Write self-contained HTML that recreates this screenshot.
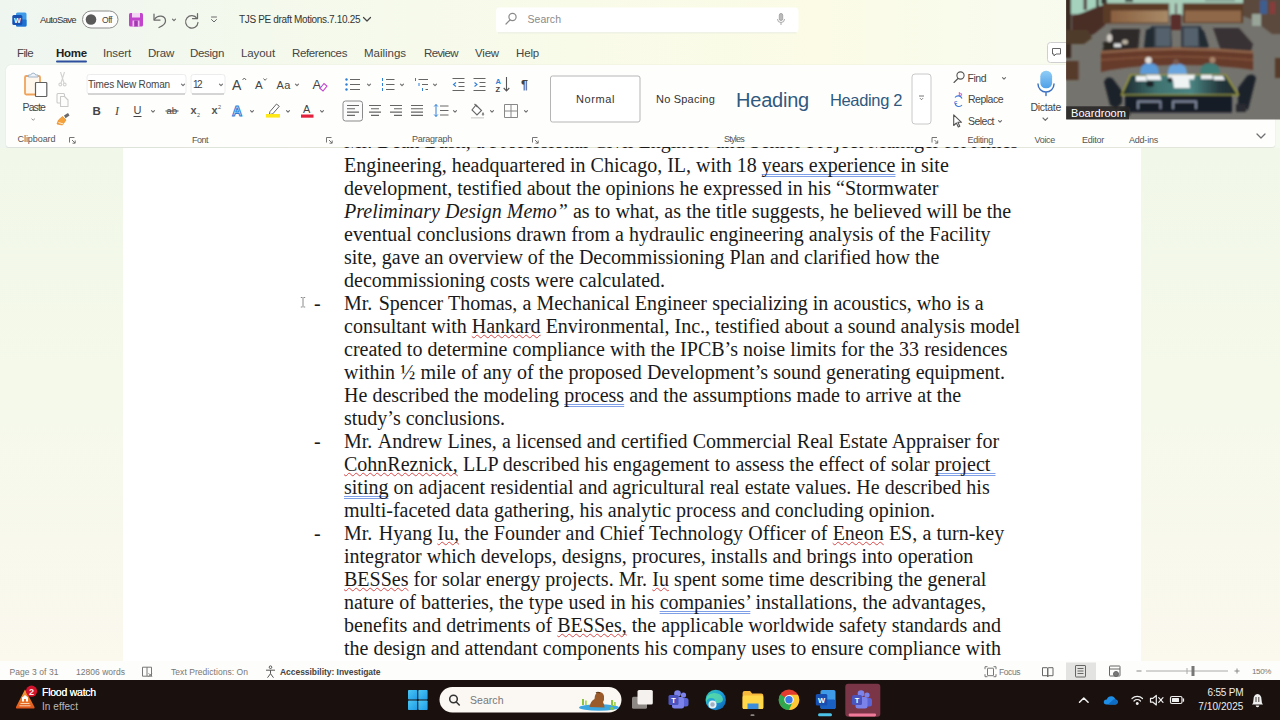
<!DOCTYPE html>
<html><head><meta charset="utf-8"><title>Word</title>
<style>
*{box-sizing:border-box;margin:0;padding:0}
html,body{width:1280px;height:720px;overflow:hidden;background:#f5f9ec;font-family:"Liberation Sans",sans-serif;}
.abs{position:absolute}
#titlebar{position:absolute;left:0;top:0;width:1280px;height:149px;background:linear-gradient(90deg,#eff6f0 0,#f4f9ed 20%,#f9fbe9 45%,#fbfbe6 64%,#f8fbee 80%,#f5faf0 100%)}
#ribbon{position:absolute;left:5.5px;top:64.5px;width:1269px;height:82.9px;background:#fefffd;border-radius:5px 5px 3px 3px;box-shadow:0 .5px 1.5px rgba(0,0,0,.10)}
#docbg{position:absolute;left:0;top:148px;width:1280px;height:512.5px;background:linear-gradient(180deg,#f2f8e9 0,#f4f9ea 45%,#fbf8ee 100%)}
#page{position:absolute;left:122.5px;top:148px;width:1018.5px;height:514px;background:#fff}
#status{position:absolute;left:0;top:660.5px;width:1280px;height:19.5px;background:#fdfdfb}
#taskbar{position:absolute;left:0;top:680px;width:1280px;height:40px;background:#1a110e}
.t{position:absolute;white-space:nowrap;color:#444}
.doc{position:absolute;left:344px;white-space:nowrap;font-family:"Liberation Serif",serif;font-size:20px;line-height:23px;color:#1a1a1a}
.dash{position:absolute;left:314px;font-family:"Liberation Serif",serif;font-size:20px;line-height:23px;color:#1a1a1a}
.sq{text-decoration:underline wavy #d94848;text-decoration-thickness:.9px;text-underline-offset:1.2px;text-decoration-skip-ink:none}
.gr{text-decoration:underline double #7f9fe6;text-decoration-thickness:.7px;text-underline-offset:1.5px;text-decoration-skip-ink:none}
</style></head><body>
<div id="titlebar"></div>
<div id="ribbon"></div>
<div id="docbg"></div>
<div id="page"></div>
<div id="status"></div>
<div id="taskbar"></div>
<!--DOC-->
<div id="doc" style="position:absolute;left:0;top:147.4px;width:1280px;height:513.4px;overflow:hidden">
<div class="doc" style="top:-17.900000000000006px">Mr. Dean Bush, a Professional Civil Engineer and Senior Project Manager for Ames</div>
<div class="doc" style="top:6.599999999999994px">Engineering, headquartered in Chicago, IL, with 18 <span class="gr">years experience</span> in site</div>
<div class="doc" style="top:29.599999999999994px">development, testified about the opinions he expressed in his “Stormwater</div>
<div class="doc" style="top:52.599999999999994px;word-spacing:0.100px"><i>Preliminary Design Memo”</i> as to what, as the title suggests, he believed will be the</div>
<div class="doc" style="top:75.6px">eventual conclusions drawn from a hydraulic engineering analysis of the Facility</div>
<div class="doc" style="top:98.6px">site, gave an overview of the Decommissioning Plan and clarified how the</div>
<div class="doc" style="top:121.6px">decommissioning costs were calculated.</div>
<div class="dash" style="top:144.6px">-</div>
<div class="doc" style="top:144.6px;word-spacing:0.109px"><span style="margin-right:1.3px">Mr.</span> Spencer Thomas, a Mechanical Engineer specializing in acoustics, who is a</div>
<div class="doc" style="top:167.6px">consultant with <span class="sq">Hankard</span> Environmental, Inc., testified about a sound analysis model</div>
<div class="doc" style="top:190.6px;word-spacing:0.117px">created to determine compliance with the IPCB’s noise limits for the 33 residences</div>
<div class="doc" style="top:213.6px;word-spacing:0.164px">within ½ mile of any of the proposed Development’s sound generating equipment.</div>
<div class="doc" style="top:236.6px;word-spacing:0.058px">He described the modeling <span class="gr">process</span> and the assumptions made to arrive at the</div>
<div class="doc" style="top:259.6px">study’s conclusions.</div>
<div class="dash" style="top:282.6px">-</div>
<div class="doc" style="top:282.6px;word-spacing:0.209px"><span style="margin-right:1.3px">Mr.</span> Andrew Lines, a licensed and certified Commercial Real Estate Appraiser for</div>
<div class="doc" style="top:305.6px;word-spacing:0.092px"><span class="sq">CohnReznick,</span> LLP described his engagement to assess the effect of solar <span class="gr">project&nbsp;</span></div>
<div class="doc" style="top:328.6px;word-spacing:0.036px"><span class="gr">siting</span> on adjacent residential and agricultural real estate values. He described his</div>
<div class="doc" style="top:351.6px">multi-faceted data gathering, his analytic process and concluding opinion.</div>
<div class="dash" style="top:374.6px">-</div>
<div class="doc" style="top:374.6px;word-spacing:0.177px"><span style="margin-right:1.3px">Mr.</span> Hyang <span class="sq">Iu,</span> the Founder and Chief Technology Officer of <span class="sq">Eneon</span> ES, a turn-key</div>
<div class="doc" style="top:397.6px;word-spacing:0.044px">integrator which develops, designs, procures, installs and brings into operation</div>
<div class="doc" style="top:420.6px;word-spacing:0.150px"><span class="sq">BESSes</span> for solar energy projects. Mr. <span class="sq">Iu</span> spent some time describing the general</div>
<div class="doc" style="top:443.6px;word-spacing:0.227px">nature of batteries, the type used in his <span class="gr">companies’</span> installations, the advantages,</div>
<div class="doc" style="top:466.6px">benefits and detriments of <span class="sq">BESSes,</span> the applicable worldwide safety standards and</div>
<div class="doc" style="top:489.6px">the design and attendant components his company uses to ensure compliance with</div>
</div>
<!--/DOC-->
<!--TITLE-->
<svg class="abs" style="left:0;top:0" width="1280" height="150" viewBox="0 0 1280 150" font-family="Liberation Sans, sans-serif">
<!-- word icon -->
<rect x="16" y="12.500" width="10.500" height="14" rx="1.500" fill="#3f9be8"/>
<rect x="16" y="19.500" width="10.500" height="7" rx="1" fill="#1f6fd0"/>
<rect x="12.300" y="15" width="10" height="10" rx="1.500" fill="#174fb0"/>
<text x="17.300" y="22.800" font-size="7.200" font-weight="bold" fill="#fff" text-anchor="middle">W</text>
<!-- autosave toggle -->
<rect x="82.5" y="11" width="35.5" height="17" rx="8.5" fill="#fdfdfd" stroke="#8c8c8c" stroke-width="1"/>
<circle cx="91" cy="19.500" r="5.300" fill="#595959"/>
<!-- save -->
<rect x="129" y="13" width="14" height="13.5" rx="1.5" fill="#c244cc"/>
<rect x="132" y="13" width="8" height="4.5" fill="#f3d6f4"/>
<rect x="132.5" y="20.5" width="7" height="6" fill="#ecc0ee"/>
<rect x="134.2" y="20.5" width="3.6" height="6" fill="#a338b0"/>
<!-- undo -->
<g fill="none" stroke="#6a6a6a" stroke-width="1.250" stroke-linecap="round" stroke-linejoin="round">
<path d="M154 14v6h6"/><path d="M154.5 19.5C157.5 14.5 165.5 15 165.5 21C165.5 24.5 162.5 26 159 27.5"/>
<path d="M172.5 19.2l1.500 1.500l1.500-1.500" stroke-width="1.1"/>
<!-- redo -->
<path d="M197.5 13.5v5h-5"/><path d="M197 18.5A6.2 6.2 0 1 0 198 22.5"/>
<!-- qat -->
<path d="M211.5 17h5M211.5 19.5l2.5 2.5l2.5-2.5" stroke-width="1"/>
<!-- title chevron -->
<path d="M363.5 17.5l3.5 3.5l3.5-3.5" stroke="#444" stroke-width="1.2"/>
</g>
<!-- search box -->
<rect x="496" y="7.500" width="302.500" height="25" rx="3.500" fill="#fff"/><path d="M498 32.800h298.500" stroke="#e4e8dc" stroke-width=".8"/>
<g fill="none" stroke="#8a8a8a" stroke-width="1.2" stroke-linecap="round"><circle cx="512.5" cy="17" r="3.6"/><path d="M510 20l-4 4"/></g>
<g fill="none" stroke="#a8a8a8" stroke-width="1"><rect x="779.3" y="13.5" width="3.4" height="7" rx="1.7" fill="#bbb"/><path d="M777.5 19a3.5 3.5 0 0 0 7 0M781 22.5v2.5"/></g>
<!-- home underline -->
<rect x="56" y="60.5" width="31" height="2" rx="1" fill="#2d4f9e"/>
<!-- comments -->
<rect x="1047.5" y="42.5" width="22" height="20" rx="3" fill="#fff" stroke="#cfcfcf"/>
<path d="M1052.5 48.5h8v5.5h-4.5l-2 2v-2h-1.5z" fill="none" stroke="#666" stroke-width="1"/>

<!-- ===== ribbon: clipboard ===== -->
<g fill="none" stroke-linejoin="round">
<rect x="25" y="76" width="15" height="18.500" rx="1.200" stroke="#f0a35c" stroke-width="1.800" fill="#fff6ec"/>
<path d="M28.500 77v-2h2.200a2.600 2.600 0 0 1 5 0h2.300v2z" stroke="#9fb4c8" stroke-width="1" fill="#eef4fa"/>
<rect x="35.500" y="82.500" width="11.300" height="14" rx=".8" fill="#fff" stroke="#5f5f5f" stroke-width="1.200"/>
<path d="M31.500 118.700l1.700 1.500l1.700-1.500" stroke="#888" stroke-width=".9"/>
<!-- cut -->
<g stroke="#d2d2d2" stroke-width="1.1"><path d="M60.5 72l3.500 11M64.500 72l-3.500 11"/><circle cx="60.3" cy="84.5" r="1.4"/><circle cx="64.7" cy="84.5" r="1.4"/></g>
<!-- copy -->
<g stroke="#cacaca" stroke-width="1.1"><rect x="57" y="93.5" width="7.5" height="9.5" rx="1"/><path d="M60.5 96.5h4l3.5 3.5v6.5h-7.5z" fill="#fdfefc"/></g>
<!-- format painter -->
<path d="M64 115.500l4-2.500l1.500 2.500l-4 2.800z" fill="#6a6a6a" stroke="none"/>
<path d="M62.500 116.500l3.500 3.500l-3.500 5l-5.500-1l1.500-4z" fill="#f4a23c" stroke="#e58a2a" stroke-width=".7"/>
<path d="M58.500 122.500l5 1.500" stroke="#fff" stroke-width=".8"/>
</g>
<!-- font boxes -->
<rect x="87" y="74.500" width="99" height="19.500" rx="2.500" fill="#fff" stroke="#ececec"/>
<path d="M88 94h97" stroke="#b4b4b4" stroke-width="1"/>
<rect x="191" y="74.500" width="34" height="19.500" rx="2.500" fill="#fff" stroke="#ececec"/>
<path d="M192 94h32" stroke="#b4b4b4" stroke-width="1"/>
<g fill="none" stroke="#707070" stroke-width="1.150" stroke-linecap="round" stroke-linejoin="round">
<path d="M181.5 84.2l1.500 1.500l1.500-1.500"/><path d="M219.5 84.2l1.500 1.500l1.500-1.500"/>
<path d="M295.5 84.2l1.500 1.500l1.500-1.500"/>
<path d="M151.5 110.7l1.500 1.500l1.500-1.500"/><path d="M250.5 110.7l1.500 1.500l1.500-1.500"/><path d="M286.5 110.7l1.500 1.500l1.500-1.500"/><path d="M320.5 110.7l1.500 1.500l1.500-1.500"/>
<path d="M367.5 84.2l1.500 1.500l1.500-1.500"/><path d="M400.5 84.2l1.500 1.500l1.500-1.500"/><path d="M433.5 84.2l1.500 1.500l1.500-1.500"/>
<path d="M453.5 110.7l1.500 1.500l1.500-1.500"/><path d="M490.5 110.7l1.500 1.500l1.500-1.500"/><path d="M524.5 110.7l1.500 1.500l1.500-1.500"/>
<path d="M1002.5 77.7l1.500 1.500l1.500-1.500"/><path d="M998.5 120.7l1.500 1.500l1.500-1.500"/><path d="M1043 118l2.3 2.3l2.3-2.3"/>
<path d="M1257 134l4 4l4-4" stroke-width="1.3"/>
</g>
<!-- font row 1 -->
<g fill="#444">
<text x="232" y="89.5" font-size="14">A</text><path d="M242.5 80l1.8-2l1.8 2" fill="none" stroke="#555" stroke-width=".9"/>
<text x="255" y="89" font-size="11.5">A</text><path d="M263.5 78.5l1.6 1.8l1.6-1.8" fill="none" stroke="#555" stroke-width=".9"/>
<text x="276.5" y="88.5" font-size="11" letter-spacing=".4">Aa</text>
<text x="312.5" y="89" font-size="13">A</text>
<path d="M320 88.5l4-5l3 2.5l-4 5z" fill="#fff" stroke="#c244cc" stroke-width="1.1"/>
<!-- row 2 -->
<text x="92.5" y="115" font-size="11.5" font-weight="bold">B</text>
<text x="115" y="115" font-size="12" font-style="italic" font-family="Liberation Serif, serif">I</text>
<text x="133.5" y="114" font-size="11">U</text><rect x="133.5" y="116" width="8" height="1" fill="#444"/>
<text x="166.500" y="114.300" font-size="9.500" fill="#444">ab</text><rect x="165.5" y="110.5" width="13" height="1" fill="#444"/>
<text x="190.5" y="114" font-size="11" font-weight="bold" fill="#555">x</text><text x="197" y="117" font-size="5.5" fill="#555">2</text>
<text x="211.5" y="114" font-size="11" font-weight="bold" fill="#555">x</text><text x="218" y="108.5" font-size="5.5" fill="#555">2</text>
<text x="232" y="116" font-size="14" font-weight="bold" fill="#cfe3fa" stroke="#2f7fd8" stroke-width="1">A</text>
<path d="M270 111.5l6.5-7.5l2.8 2.3l-6.5 7.5l-3.5.8z" fill="#fff" stroke="#666" stroke-width="1"/>
<rect x="266" y="114" width="14" height="3.6" fill="#ffe81a"/>
<text x="303" y="112.5" font-size="11">A</text>
<rect x="301" y="114.5" width="12.5" height="3.2" fill="#e2213c"/>
</g>
<!-- launchers -->
<g fill="none" stroke="#666" stroke-width=".9">
<path id="ln" d="M69.5 142.500v-5h5M72 140l3 3M75.200 140.500v2.700h-2.700"/>
<path d="M326.500 142.500v-5h5M329 140l3 3M332.200 140.500v2.700h-2.700"/>
<path d="M532.500 142.500v-5h5M535 140l3 3M538.200 140.500v2.700h-2.700"/>
<path d="M932 142.500v-5h5M934.500 140l3 3M937.700 140.500v2.700h-2.700"/>
</g>
<!-- paragraph row 1 -->
<g fill="none" stroke="#666" stroke-width="1.1">
<g fill="#2f7fd8" stroke="none"><circle cx="346.500" cy="79.500" r="1.2"/><circle cx="346.500" cy="84.500" r="1.2"/><circle cx="346.500" cy="89.500" r="1.2"/></g>
<path d="M350 79.500h10M350 84.500h10M350 89.500h10"/>
<g stroke="#2f7fd8" stroke-width="1"><path d="M382.500 78v3M382.500 83v3M382.500 88v3"/></g>
<path d="M386 79.500h8.500M386 84.500h8.500M386 89.500h8.500"/>
<g stroke="#2f7fd8" stroke-width="1"><path d="M415.500 78v3M419 83v3M422.500 88v3"/></g>
<path d="M418.500 79.500h9.500M422 84.500h6M425.500 89.500h2.500"/>
<!-- indents -->
<path d="M452.500 78.500h12M458.500 82.500h6M458.500 86.500h6M452.500 90.500h12"/>
<path d="M456 82.500l-2.500 2l2.500 2" stroke="#2f7fd8"/>
<path d="M473.500 78.500h12M479.500 82.500h6M479.500 86.500h6M473.500 90.500h12"/>
<path d="M474.500 82.500l2.500 2l-2.500 2" stroke="#2f7fd8"/>
<!-- sort -->
<path d="M506.500 77v13.500M503.700 88l2.800 3l2.800-3" stroke="#555"/>
</g>
<text x="495.500" y="83.500" font-size="7.500" font-weight="bold" fill="#2f7fd8">A</text>
<text x="495.500" y="91.500" font-size="7.500" font-weight="bold" fill="#444">Z</text>
<text x="521" y="89" font-size="12.500" font-weight="bold" fill="#444">¶</text>
<!-- paragraph row 2 -->
<rect x="343" y="101" width="19.500" height="20" rx="2.500" fill="#fbfbfb" stroke="#8a8a8a"/>
<g fill="none" stroke="#666" stroke-width="1.1">
<path d="M347 105.500h12M347 108.800h8M347 112.100h12M347 115.400h8"/>
<path d="M369 105.500h12M371 108.800h8M369 112.100h12M371 115.400h8"/>
<path d="M390 105.500h12M394 108.800h8M390 112.100h12M394 115.400h8"/>
<path d="M411 105.500h12M411 108.800h12M411 112.100h12M411 115.400h12"/>
<path d="M440 106h8.500M440 110.500h8.500M440 115h8.500"/>
<path d="M436 104.500v12M434.200 106.500l1.800-2l1.800 2M434.200 114.500l1.800 2l1.800-2" stroke="#2f7fd8" stroke-width="1"/>
<!-- shading bucket -->
<path d="M476 105l5.500 5.500l-4.500 4.500l-5-5z" fill="#fff"/><path d="M474.500 104l3 3" /><path d="M483 112.500q1.500 2.200 0 3q-1.500-.8 0-3z" fill="#666" stroke-width=".6"/>
<rect x="471" y="117" width="13" height="1.600" fill="#d9d9d9" stroke="none"/>
<!-- borders -->
<path d="M504.500 104.500h13v13h-13zM511 104.500v13M504.500 111h13" stroke="#888" stroke-width="1"/>
</g>
<!-- styles -->
<rect x="550.500" y="76" width="89.500" height="46" rx="2" fill="#fff" stroke="#b5b5b5"/>
<rect x="912" y="74" width="19" height="50" rx="3" fill="#fff" stroke="#c8c8c8"/>
<path d="M919 96h5M920 98.2l1.500 1.500l1.500-1.500" fill="none" stroke="#666" stroke-width=".9"/>
<!-- editing -->
<g fill="none" stroke="#555" stroke-width="1.1" stroke-linecap="round">
<circle cx="960.500" cy="75.500" r="3.600"/><path d="M958 78.500l-4 4"/>
<path d="M953.700 114.800v10.700l2.700-2.500l1.900 3.900l1.500-.7l-1.900-3.900h3.600z" stroke-linejoin="round" fill="#fff"/>
</g>
<path d="M955 103.500a4 4 0 0 0 7 1.500M962 98.500a4 4 0 0 0-7-1" fill="none" stroke="#3b78d8" stroke-width="1.1"/>
<text x="958.500" y="96" font-size="6" fill="#c244cc" font-weight="bold">b</text>
<text x="954" y="104" font-size="6" fill="#3b78d8" font-weight="bold">c</text>
<!-- dictate -->
<defs><linearGradient id="mic" x1="0" y1="0" x2="0" y2="1"><stop offset="0" stop-color="#8fcdf6"/><stop offset="1" stop-color="#4f9fe8"/></linearGradient></defs>
<rect x="1040.300" y="70.800" width="11.800" height="17.500" rx="5.500" fill="url(#mic)"/>
<path d="M1038 84a8 8 0 0 0 16 0M1046 92v3.500" fill="none" stroke="#3b6fc0" stroke-width="1.400" stroke-linecap="round"/>
</svg>

<div class="t" style="left:40px;top:14.0px;font-size:9.5px;line-height:11px;letter-spacing:-0.65px;color:#333;">AutoSave</div>
<div class="t" style="left:102px;top:14.5px;font-size:8.5px;line-height:10px;letter-spacing:-0.40px;color:#444;">Off</div>
<div class="t" style="left:239px;top:13.5px;font-size:10px;line-height:12px;letter-spacing:-0.34px;color:#333;">TJS PE draft Motions.7.10.25</div>
<div class="t" style="left:527.5px;top:13.0px;font-size:10.5px;line-height:13px;letter-spacing:0.04px;color:#8a8a8a;">Search</div>
<div class="t" style="left:17px;top:45.5px;font-size:11.5px;line-height:14px;letter-spacing:-0.63px;color:#454545;">File</div>
<div class="t" style="left:56px;top:45.5px;font-size:11.5px;line-height:14px;letter-spacing:-0.24px;color:#222;font-weight:bold">Home</div>
<div class="t" style="left:103px;top:45.5px;font-size:11.5px;line-height:14px;letter-spacing:-0.13px;color:#454545;">Insert</div>
<div class="t" style="left:148px;top:45.5px;font-size:11.5px;line-height:14px;letter-spacing:-0.21px;color:#454545;">Draw</div>
<div class="t" style="left:190px;top:45.5px;font-size:11.5px;line-height:14px;letter-spacing:-0.30px;color:#454545;">Design</div>
<div class="t" style="left:241px;top:45.5px;font-size:11.5px;line-height:14px;letter-spacing:-0.09px;color:#454545;">Layout</div>
<div class="t" style="left:292px;top:45.5px;font-size:11.5px;line-height:14px;letter-spacing:-0.38px;color:#454545;">References</div>
<div class="t" style="left:364px;top:45.5px;font-size:11.5px;line-height:14px;letter-spacing:-0.02px;color:#454545;">Mailings</div>
<div class="t" style="left:424px;top:45.5px;font-size:11.5px;line-height:14px;letter-spacing:-0.62px;color:#454545;">Review</div>
<div class="t" style="left:475px;top:45.5px;font-size:11.5px;line-height:14px;letter-spacing:-0.18px;color:#454545;">View</div>
<div class="t" style="left:516px;top:45.5px;font-size:11.5px;line-height:14px;letter-spacing:-0.16px;color:#454545;">Help</div>
<!--/TITLE-->
<!--RIBBON-->
<div class="t" style="left:22.5px;top:100.5px;font-size:10.5px;line-height:13px;letter-spacing:-0.87px;color:#444;">Paste</div>
<div class="t" style="left:17.5px;top:134.0px;font-size:9px;line-height:11px;letter-spacing:-0.06px;color:#555;">Clipboard</div>
<div class="t" style="left:88px;top:78.5px;font-size:10px;line-height:12px;letter-spacing:-0.18px;color:#444;">Times New Roman</div>
<div class="t" style="left:193px;top:78.5px;font-size:10px;line-height:12px;letter-spacing:-1.56px;color:#444;">12</div>
<div class="t" style="left:192px;top:134.5px;font-size:9px;line-height:11px;letter-spacing:-0.50px;color:#555;">Font</div>
<div class="t" style="left:412px;top:134.0px;font-size:9px;line-height:11px;letter-spacing:-0.23px;color:#555;">Paragraph</div>
<div class="t" style="left:576px;top:92.5px;font-size:11px;line-height:13px;letter-spacing:0.59px;color:#333;">Normal</div>
<div class="t" style="left:656px;top:92.5px;font-size:11px;line-height:13px;letter-spacing:0.21px;color:#333;">No Spacing</div>
<div class="t" style="left:736px;top:88.0px;font-size:20px;line-height:24px;letter-spacing:-0.22px;color:#30597f;">Heading</div>
<div class="t" style="left:830px;top:90.0px;font-size:16.5px;line-height:20px;letter-spacing:-0.36px;color:#30597f;">Heading 2</div>
<div class="t" style="left:724px;top:134.0px;font-size:9px;line-height:11px;letter-spacing:-0.75px;color:#555;">Styles</div>
<div class="t" style="left:967.5px;top:71.5px;font-size:10.5px;line-height:13px;letter-spacing:-0.48px;color:#444;">Find</div>
<div class="t" style="left:968px;top:93.0px;font-size:10.5px;line-height:13px;letter-spacing:-0.50px;color:#444;">Replace</div>
<div class="t" style="left:968px;top:114.5px;font-size:10.5px;line-height:13px;letter-spacing:-0.53px;color:#444;">Select</div>
<div class="t" style="left:967.5px;top:134.8px;font-size:9px;line-height:11px;letter-spacing:-0.29px;color:#555;">Editing</div>
<div class="t" style="left:1030.5px;top:100.5px;font-size:10.5px;line-height:13px;letter-spacing:-0.31px;color:#444;">Dictate</div>
<div class="t" style="left:1034.5px;top:134.8px;font-size:9px;line-height:11px;letter-spacing:-0.31px;color:#555;">Voice</div>
<div class="t" style="left:1082px;top:134.8px;font-size:9px;line-height:11px;letter-spacing:-0.25px;color:#555;">Editor</div>
<div class="t" style="left:1129px;top:134.8px;font-size:9px;line-height:11px;letter-spacing:-0.22px;color:#555;">Add-ins</div>
<!--/RIBBON-->
<!--STATUS-->
<svg class="abs" style="left:0;top:660px" width="1280" height="60" viewBox="0 660 1280 60" font-family="Liberation Sans, sans-serif">
<!-- status icons -->
<g fill="none" stroke="#777" stroke-width="1" transform="translate(0 .7)">
<path d="M142.500 666.500h9v9h-9zM147 666.500v9"/><path d="M148.500 672.500l3.500 3.500M152 672.500l-3.500 3.500" stroke-width=".9"/>
<circle cx="270.500" cy="666.500" r="1.300" stroke="#555"/><path d="M266 669.500h9M270.500 669.500v3.500l-3 4M270.500 673l3 4" stroke="#555"/>
<path d="M985 668.500v-2.500h2.500M996 668.500v-2.500h-2.500M985 673.500v2.500h2.500M996 673.500v2.500h-2.500"/><rect x="987.500" y="667.500" width="6" height="7.500" rx=".5"/>
<path d="M1042.500 667h4.500q.8 0 .8 1v8q0-1-.8-1h-4.500zM1053 667h-4.500q-.8 0-.8 1v8q0-1 .8-1h4.500z" stroke="#666"/>
</g>
<rect x="1066" y="662.500" width="30" height="17.500" fill="#e3e3e1"/>
<g fill="none" stroke="#666" stroke-width="1">
<rect x="1075.500" y="665.500" width="10" height="11.500" rx=".5"/><path d="M1077.500 668.500h6M1077.500 671h6M1077.500 673.500h6"/>
<rect x="1109.500" y="666" width="10.500" height="10" rx=".5"/><path d="M1109.500 669h10.500"/><circle cx="1116" cy="674" r="2.500" fill="#777"/>
<path d="M1136.500 671h5" stroke="#888"/><path d="M1146 671h82" stroke="#aaa" stroke-width="1"/><path d="M1234.500 671h5M1237 668.500v5" stroke="#888"/>
</g>
<rect x="1191.500" y="666" width="3" height="10" fill="#777"/>
<path d="M1187 668v6" stroke="#aaa" stroke-width="1"/>
<!-- taskbar: weather -->
<defs>
<linearGradient id="wx" x1="0" y1="0" x2="0" y2="1"><stop offset="0" stop-color="#f7a035"/><stop offset="1" stop-color="#e0541c"/></linearGradient>
<linearGradient id="win" x1="0" y1="0" x2="1" y2="1"><stop offset="0" stop-color="#4cc7f5"/><stop offset="1" stop-color="#1f9be6"/></linearGradient>
<filter id="b1"><feGaussianBlur stdDeviation=".5"/></filter>
</defs>
<path d="M25 689.500l9.500 17.500q.5 1.500-1 1.500h-16.500q-1.500 0-1-1.500z" fill="url(#wx)"/>
<path d="M20.500 703.500h9M19.500 705.800h11" stroke="#fbe0c0" stroke-width=".9"/>
<path d="M22 701.500v-4l3-2.500l3 2.500v4h-2v-2.500h-2v2.500z" fill="#fff"/>
<circle cx="31.500" cy="691.200" r="5.600" fill="#d4142c"/>
<text x="31.500" y="694.600" font-size="9" font-weight="bold" fill="#ffe9e9" text-anchor="middle">2</text>
<!-- windows -->
<g fill="url(#win)"><rect x="408" y="690" width="9.300" height="9.500" rx=".8"/><rect x="418.300" y="690" width="9.300" height="9.500" rx=".8"/><rect x="408" y="700.500" width="9.300" height="9.500" rx=".8"/><rect x="418.300" y="700.500" width="9.300" height="9.500" rx=".8"/></g>
<!-- search pill -->
<rect x="439.500" y="687" width="182" height="25.500" rx="12.750" fill="#fbf8f3"/>
<g fill="none" stroke="#333" stroke-width="1.500" stroke-linecap="round"><circle cx="453.500" cy="699" r="3.800"/><path d="M456.300 702l3 3"/></g>
<g filter="url(#b1)">
<ellipse cx="599" cy="707.500" rx="20" ry="3.200" fill="#3aa6e0"/>
<path d="M589.500 707q1-6 5-8q0-6 4.500-7q4 0 5 4q.5 4-1 6q1.500 3 1.500 5.500z" fill="#9a5a2c"/>
<path d="M596 693q2-1.500 4 0" stroke="#5a3418" stroke-width="1.200" fill="none"/>
<rect x="582" y="699" width="2" height="6" fill="#8cc63f"/><rect x="585" y="700.500" width="1.800" height="4.500" fill="#a8d65a"/>
<rect x="611" y="700" width="2" height="6" fill="#8cc63f"/><rect x="614" y="702" width="1.800" height="4" fill="#a8d65a"/>
<circle cx="612" cy="708.500" r="1.800" fill="#7fc24a"/>
</g>
<!-- task view -->
<rect x="632" y="696.800" width="15" height="12" rx="1.500" fill="#8d8884"/>
<rect x="637.500" y="690" width="15.300" height="14.400" rx="1.500" fill="#f4f1ee"/>
<!-- teams -->
<g>
<circle cx="683.500" cy="695" r="2.600" fill="#7b83eb"/><rect x="679" y="698" width="9.500" height="8.500" rx="2.500" fill="#5b64d6"/>
<circle cx="677.500" cy="693.500" r="3.300" fill="#7b83eb"/><rect x="672" y="697" width="12" height="11.500" rx="2.500" fill="#7b83eb"/>
<rect x="668.500" y="695" width="10" height="10" rx="1.500" fill="#4b53bc"/>
<text x="673.500" y="703" font-size="7.500" font-weight="bold" fill="#fff" text-anchor="middle">T</text>
</g>
<!-- edge -->
<defs><linearGradient id="edg" x1="0" y1="0" x2="1" y2="1"><stop offset="0" stop-color="#37c5a8"/><stop offset=".5" stop-color="#1b9de2"/><stop offset="1" stop-color="#0c59a4"/></linearGradient></defs>
<circle cx="715.700" cy="700" r="10.200" fill="url(#edg)"/>
<path d="M706 703q-1-9 8-10q8 0 9 6q0 4-5 4q-3 0-3-2q0-3-4-3q-4 0-5 5z" fill="#5fe0a0" opacity=".75"/>
<circle cx="712.500" cy="704.500" r="4" fill="#e8eef5"/><circle cx="712.500" cy="704.500" r="2.200" fill="#9fb0c4"/>
<!-- folder -->
<path d="M742.600 693q0-2 2-2h5.500l2 2.500h9.200q2 0 2 2v12q0 1.500-1.500 1.500h-17.700q-1.500 0-1.500-1.500z" fill="#f6b93b"/>
<rect x="742.600" y="695.500" width="20.700" height="13.500" rx="1.500" fill="#ffd84a"/>
<rect x="747.500" y="703.500" width="11" height="5.500" fill="#3b8ede"/>
<rect x="750.500" y="714.300" width="4" height="1.800" rx=".9" fill="#8a8683"/>
<!-- chrome -->
<circle cx="789" cy="699.800" r="10.200" fill="#e33b2e"/>
<path d="M789 699.800l-8.900 5.100a10.200 10.200 0 0 0 8.900 5.100a10.200 10.200 0 0 0 0 0l5-8.600z" fill="#2da94f"/>
<path d="M789 699.800l-8.800-5.200a10.200 10.200 0 0 0-.1 10.300z" fill="#2da94f"/>
<path d="M789 710a10.200 10.200 0 0 0 8.900-15.300h-8.900l4 6.500z" fill="#fcc934"/>
<circle cx="789" cy="699.800" r="4.700" fill="#fff"/><circle cx="789" cy="699.800" r="3.700" fill="#3b78e7"/>
<!-- word -->
<rect x="820.500" y="690" width="15" height="19" rx="1.800" fill="#3f9be8"/>
<rect x="820.500" y="699.500" width="15" height="9.500" rx="1.500" fill="#1a5fc4"/>
<rect x="815.800" y="694" width="11.500" height="11.500" rx="1.500" fill="#174fb0"/>
<text x="821.500" y="703" font-size="7.500" font-weight="bold" fill="#fff" text-anchor="middle">W</text>
<rect x="818" y="713.200" width="14" height="3" rx="1.500" fill="#4cc2e8"/>
<!-- teams active -->
<rect x="845.300" y="683.700" width="35" height="33" rx="3" fill="#7a3546"/>
<g transform="translate(183.500 0)">
<circle cx="683.500" cy="695" r="2.600" fill="#7b83eb"/><rect x="679" y="698" width="9.500" height="8.500" rx="2.500" fill="#5b64d6"/>
<circle cx="677.500" cy="693.500" r="3.300" fill="#7b83eb"/><rect x="672" y="697" width="12" height="11.500" rx="2.500" fill="#7b83eb"/>
<rect x="668.500" y="695" width="10" height="10" rx="1.500" fill="#4b53bc"/>
<text x="673.500" y="703" font-size="7.500" font-weight="bold" fill="#fff" text-anchor="middle">T</text>
</g>
<rect x="848.600" y="713.600" width="27.500" height="2.900" rx="1.450" fill="#ef7a9a"/>
<!-- tray -->
<path d="M1079.500 702.300l4.300-4.300l4.300 4.300" fill="none" stroke="#f2f2f2" stroke-width="1.500" stroke-linecap="round" stroke-linejoin="round"/>
<path d="M1106.500 704.500q-3-.2-2.700-3q.5-2.300 3-2q1.200-3.500 4.800-3.300q3 .3 3.800 3.300q2.600.3 2.400 2.800q-.3 2.200-2.500 2.200z" fill="#1e8fe8"/>
<path d="M1108 704.500l6-5.500q2.500 0 3.500 2.500q.3 2.800-2.200 3z" fill="#0f6cc4"/>
<g fill="none" stroke="#eee" stroke-width="1.200" stroke-linecap="round">
<path d="M1132 698.500a7.500 7.500 0 0 1 10.500 0M1134 701a4.700 4.700 0 0 1 6.500 0"/><circle cx="1137.250" cy="703.500" r=".9" fill="#eee"/>
<path d="M1150.500 698.300h2.500l3.300-2.800v9.500l-3.300-2.800h-2.500z" stroke-linejoin="round"/><path d="M1158.700 697.700l4.300 4.600M1163 697.700l-4.300 4.600"/>
<rect x="1170.500" y="696.500" width="11.500" height="7" rx="1.500"/><path d="M1183.500 698.800v2.400"/>
</g>
<rect x="1172" y="698" width="7" height="4" rx=".5" fill="#eee"/>
<path d="M1252 704.500q1.500-1.500 1.500-5q0-5 4-5.500q4 .5 4 5.500q0 3.500 1.500 5zM1255.700 705.500a1.800 1.800 0 0 0 3.600 0z" fill="#f0f0f0"/>
<path d="M1256 697v5M1258.800 697v5" stroke="#1c120d" stroke-width=".8"/>
</svg>
<svg class="abs" id="ibeam" style="left:298px;top:295px" width="10" height="14" viewBox="298 295 10 14"><path d="M300.800 297.500h1.700M303.500 297.500h1.700M300.800 307h1.700M303.500 307h1.700M303 297.800v9" fill="none" stroke="#8a8a8a" stroke-width="1"/></svg>

<div class="t" style="left:9.5px;top:666.7px;font-size:8.5px;line-height:10px;letter-spacing:0.07px;color:#777;">Page 3 of 31</div>
<div class="t" style="left:76px;top:666.7px;font-size:8.5px;line-height:10px;letter-spacing:0.03px;color:#777;">12806 words</div>
<div class="t" style="left:171px;top:666.7px;font-size:8.5px;line-height:10px;letter-spacing:0.05px;color:#777;">Text Predictions: On</div>
<div class="t" style="left:280px;top:666.7px;font-size:8.5px;line-height:10px;letter-spacing:-0.04px;color:#444;font-weight:bold">Accessibility: Investigate</div>
<div class="t" style="left:999px;top:666.7px;font-size:8.5px;line-height:10px;letter-spacing:-0.43px;color:#777;">Focus</div>
<div class="t" style="left:1252px;top:666.7px;font-size:8px;line-height:10px;letter-spacing:-0.37px;color:#777;">150%</div>
<!--/STATUS-->
<!--TASKBAR-->
<div class="t" style="left:42px;top:686.3px;font-size:10.5px;line-height:13px;letter-spacing:-0.24px;color:#fff;text-shadow:0 0 .4px #fff">Flood watch</div>
<div class="t" style="left:42px;top:700.5px;font-size:10px;line-height:12px;letter-spacing:0.07px;color:#bbb;">In effect</div>
<div class="t" style="left:470px;top:693.5px;font-size:10.5px;line-height:13px;letter-spacing:0.04px;color:#777;">Search</div>
<div class="t" style="left:1207.5px;top:687.3px;font-size:10px;line-height:12px;letter-spacing:-0.18px;color:#eee;">6:55 PM</div>
<div class="t" style="left:1198.3px;top:701.0px;font-size:10px;line-height:12px;letter-spacing:0.08px;color:#eee;">7/10/2025</div>
<!--/TASKBAR-->
<!--VIDEO-->
<svg class="abs" style="left:1066px;top:0" width="214" height="120" viewBox="1066 0 214 120">
<defs><filter id="vb" x="-5%" y="-5%" width="110%" height="110%"><feGaussianBlur stdDeviation="0.9"/></filter>
<clipPath id="vc"><rect x="1066.200" y="0" width="214" height="119.400"/></clipPath>
<linearGradient id="tbl" x1="0" y1="0" x2="1" y2="0"><stop offset="0" stop-color="#1e2a30"/><stop offset=".3" stop-color="#3f7270"/><stop offset=".6" stop-color="#4a8583"/><stop offset=".85" stop-color="#25383c"/><stop offset="1" stop-color="#1e2a30"/></linearGradient>
<linearGradient id="wood" x1="0" y1="0" x2="1" y2="0"><stop offset="0" stop-color="#8a6040"/><stop offset="1" stop-color="#a88a68"/></linearGradient>
</defs>
<g clip-path="url(#vc)">
<rect x="1066" y="0" width="214" height="120" fill="#74736d"/>
<g filter="url(#vb)">
<!-- top wall band -->
<rect x="1070" y="-4" width="180" height="7.500" fill="#a6cdb9"/>
<path d="M1071 -2h34v9l-10 3l-14 4h-10z" fill="#a4d2bd"/>
<!-- left wall -->
<rect x="1083.500" y="-2" width="3.500" height="12" fill="#5a4a44"/><rect x="1096" y="-2" width="3" height="9" fill="#4a4a44"/><rect x="1101" y="-2" width="6" height="6" fill="#3a3a36"/><rect x="1125" y="-2" width="8" height="4" fill="#4a5a52"/><rect x="1205" y="-2" width="30" height="3.500" fill="#8aa598"/>
<rect x="1062" y="-2" width="9" height="60" fill="#3a2c24"/>
<path d="M1072 16l10-3l12-5l12-4l6 4v8l-8 10l-10 8l-14 6l-8 0z" fill="#4a2d28"/>
<path d="M1066 30h22l4 8l-8 6h-18z" fill="#4f3a2c"/>
<!-- right wall -->
<path d="M1243 -2h43v36h-14l-18-14l-11-4z" fill="#5b4a3c"/>
<rect x="1260" y="0" width="7" height="14" fill="#3e5f8f"/><rect x="1270" y="2" width="5" height="12" fill="#8a3a3a"/><rect x="1252" y="14" width="9" height="12" fill="#9aa59a"/>
<!-- back benches -->
<rect x="1103" y="3.500" width="65.500" height="20" fill="#5a3a28"/>
<rect x="1111" y="10.500" width="57" height="12" fill="url(#wood)"/>
<rect x="1183" y="3.500" width="60" height="19.500" fill="#5a3a28"/>
<rect x="1185" y="10.500" width="56" height="11.500" fill="#8f6848"/>
<!-- pillars -->
<rect x="1169.500" y="-2" width="5.500" height="17" fill="#a9cdb9"/><rect x="1177" y="-2" width="5.500" height="17" fill="#a9cdb9"/>
<rect x="1171" y="14" width="10" height="16" fill="#5a2f2a"/>
<!-- seat blocks -->
<path d="M1112 29h28l-2 22h-36z" fill="#2e2a2a"/>
<path d="M1151 26h20l1 22h-28z" fill="#3a424c"/>
<path d="M1181 26h20l7 22h-27z" fill="#3a424c"/>
<path d="M1213 28h26l14 16l-2 7h-30z" fill="#383334"/>
<rect x="1156" y="28" width="14" height="18" fill="#55626d"/><rect x="1184" y="28" width="14" height="18" fill="#55626d"/>
<path d="M1146 30l8-3v20l-10 1zM1198 27l6 4l5 16l-9 0z" fill="#222a33"/>
<!-- person back-left -->
<ellipse cx="1109.500" cy="38" rx="2.800" ry="4" fill="#cfc9c2"/><path d="M1103 42h10l4 8h-13z" fill="#2a2624"/><rect x="1114" y="43.500" width="7" height="3.500" fill="#ddd"/><ellipse cx="1125" cy="42" rx="3" ry="2.500" fill="#b8b0a0"/>
<!-- curved rail -->
<path d="M1101 51q76-7 152 0v19q-30-5-76-5q-46 0-76 7z" fill="#663a2b"/>
<path d="M1101 51q76-7 152 0v2.500q-76-7-152 0z" fill="#8f6448"/>
<path d="M1101 59q76-7 152 0v2q-76-7-152 0z" fill="#7d4f38"/>
<!-- side furniture -->
<rect x="1062" y="61" width="16.500" height="19" fill="#573a2c"/><rect x="1275" y="58" width="8" height="20" fill="#573a2c"/>
<!-- people -->
<path d="M1140 74q0-11 9.500-11q9.500 0 9.500 11z" fill="#5a9ad8"/><circle cx="1148.500" cy="60.300" r="3.300" fill="#e4e0da"/>
<path d="M1167.500 74q0-10.500 9.800-10.500q9.800 0 9.800 10.500z" fill="#6aa5de"/><circle cx="1176" cy="62" r="3" fill="#7a5a4c"/>
<path d="M1200 74q0-11 10-11q10 0 10 11z" fill="#3f7d76"/><circle cx="1212.500" cy="60" r="3" fill="#a8846c"/>
<!-- chairs -->
<path d="M1104 82q3-7 9-3l9 12v12l-6 6l-6-4z" fill="#1e222a"/>
<path d="M1256 78q-3-6-9-2l-9 12v16l10 6z" fill="#1e222a"/>
<!-- under table -->
<path d="M1125 95h107v17.500h-107z" fill="#181c26"/>
<path d="M1137 100.500h24v2h-24zM1172 100.500h25v2h-25z" fill="#8a93a8"/>
<path d="M1137 101h2v8h-2zM1159.500 101h2v8h-2zM1172 101h2v8h-2zM1195 101h2v8h-2z" fill="#7a8498"/>
<path d="M1120 108h10v8h-10zM1236 104h10v8h-10z" fill="#2a2c30"/>
<!-- table -->
<path d="M1130 74.200h96l13.500 21.300h-119z" fill="#9a9a3c"/>
<path d="M1131.200 75.500h93.800l12 18.800h-114.500z" fill="url(#tbl)"/>
<!-- papers -->
<path d="M1136 76h10l1 5h-11zM1146 75h14l1.500 5h-14z" fill="#eef2f4"/><path d="M1168 74.500h27l-1 5h-5l1 8.500h-16l-1-8h-5z" fill="#f0f3f4"/><path d="M1201 75h11l1 4h-12zM1213 76h10l2 4h-11z" fill="#eceff0"/>
<ellipse cx="1150" cy="84" rx="4" ry="3" fill="#1a2228"/><ellipse cx="1170" cy="80" rx="2.500" ry="2.500" fill="#1a2228"/>
</g>
<rect x="1066" y="106.300" width="63" height="13.200" fill="#262524" opacity=".85"/>
</g>
</svg>

<div class="t" style="left:1071px;top:107.0px;font-size:11px;line-height:13px;letter-spacing:0.06px;color:#fff;">Boardroom</div>
<!--/VIDEO-->
</body></html>
